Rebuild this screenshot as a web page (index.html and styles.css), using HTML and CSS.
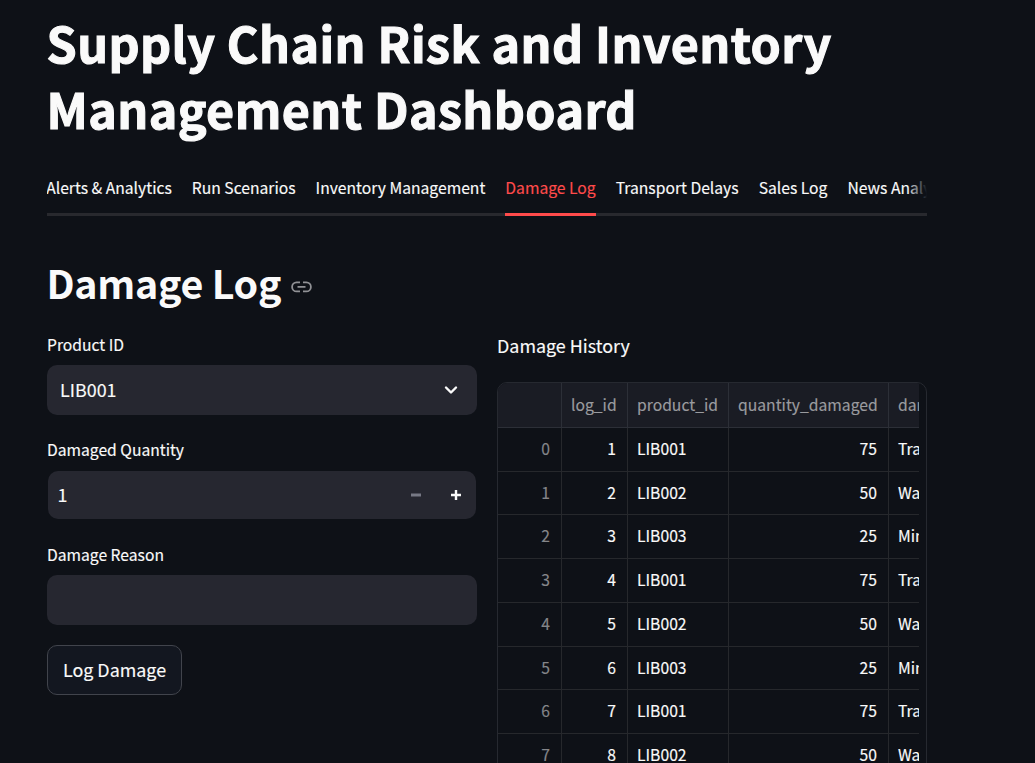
FILE: index.html
```html
<!DOCTYPE html>
<html lang="en">
<head>
<meta charset="utf-8">
<title>Supply Chain Risk and Inventory Management Dashboard</title>
<link rel="stylesheet" href="styles.css">
</head>
<body>
<main class="page">
  <h1 class="title">Supply Chain Risk and Inventory<br>Management Dashboard</h1>
  <nav class="tabs">
    <a class="tab">Alerts &amp; Analytics</a>
    <a class="tab">Run Scenarios</a>
    <a class="tab">Inventory Management</a>
    <a class="tab active">Damage Log</a>
    <a class="tab">Transport Delays</a>
    <a class="tab">Sales Log</a>
    <a class="tab">News Analysis</a>
  </nav>
  <div class="heading">
    <h2 class="heading-text">Damage Log</h2>
    <svg class="link-icon" width="21" height="12" viewBox="0 0 21 12" fill="none" stroke="#909195" stroke-width="1.8"><path d="M9 1.4H5.6a4.5 4.5 0 0 0 0 9H9M12 1.4h3.4a4.5 4.5 0 0 1 0 9H12M6.5 5.9h8"/></svg>
  </div>
  <div class="columns">
    <form class="form">
      <label class="label">Product ID</label>
      <div class="field select"><span class="value">LIB001</span>
        <svg width="14" height="10" viewBox="0 0 14 10" fill="none" stroke="#fafafa" stroke-width="2.4" stroke-linecap="round" stroke-linejoin="round"><path d="M2 2.5l5 5 5-5"/></svg>
      </div>
      <label class="label">Damaged Quantity</label>
      <div class="field number"><span class="value">1</span>
        <svg class="steps" width="52" height="12" viewBox="0 0 52 12"><path fill="#777985" d="M1 4.5h10v3H1z"/><path fill="#fafafa" d="M41 4.8h3.8V1h2.4v3.8H51v2.4h-3.8V11h-2.4V7.2H41z"/></svg>
      </div>
      <label class="label">Damage Reason</label>
      <div class="field"></div>
      <button class="button" type="button">Log Damage</button>
    </form>
    <section class="history">
      <p class="history-title">Damage History</p>
      <div class="frame">
        <div class="grid">
          <div class="row head"><span></span><span>log_id</span><span>product_id</span><span>quantity_damaged</span><span>damage_reason</span></div>
          <div class="row"><span>0</span><span>1</span><span>LIB001</span><span>75</span><span>Transport</span></div>
          <div class="row"><span>1</span><span>2</span><span>LIB002</span><span>50</span><span>Warehouse</span></div>
          <div class="row"><span>2</span><span>3</span><span>LIB003</span><span>25</span><span>Minor</span></div>
          <div class="row"><span>3</span><span>4</span><span>LIB001</span><span>75</span><span>Transport</span></div>
          <div class="row"><span>4</span><span>5</span><span>LIB002</span><span>50</span><span>Warehouse</span></div>
          <div class="row"><span>5</span><span>6</span><span>LIB003</span><span>25</span><span>Minor</span></div>
          <div class="row"><span>6</span><span>7</span><span>LIB001</span><span>75</span><span>Transport</span></div>
          <div class="row"><span>7</span><span>8</span><span>LIB002</span><span>50</span><span>Warehouse</span></div>
        </div>
      </div>
    </section>
  </div>
</main>
</body>
</html>
```
FILE: styles.css
```css
* { box-sizing: border-box; }
body {
  margin: 0;
  background: #0e1117;
  color: #fafafa;
  font-family: "Noto Sans CJK SC", "Noto Sans", sans-serif;
  font-size: 17.9px;
  -webkit-text-stroke: 0.15px;
}
.page { width: 880px; height: 763px; margin-left: 47px; padding-top: 9px; overflow: hidden; }
.title {
  margin: 0 0 0 -0.5px;
  font-size: 48.4px;
  line-height: 66px;
  font-weight: 700;
  letter-spacing: 0.43px;
  white-space: nowrap;
  -webkit-text-stroke: 1.1px;
}
.tabs {
  display: flex;
  gap: 20px;
  position: relative;
  height: 50px;
  margin-top: 25px;
  box-shadow: inset 0 -3px #28292e;
  overflow: hidden;
  white-space: nowrap;
  font-size: 15.68px;
  line-height: 44px;
}
.tabs::after {
  content: "";
  position: absolute;
  right: 0;
  top: 0;
  width: 20px;
  height: 47px;
  background: linear-gradient(to right, transparent, #0e1117);
}
.tab { flex: none; height: 50px; }
.tab:first-child { margin-left: -0.8px; }
.tab.active { color: #ff4b4b; border-bottom: 3px solid #ff4b4b; }
.heading { display: flex; align-items: center; gap: 9.5px; height: 54px; margin-top: 40px; }
.heading-text {
  margin: 0 0 0 -0.5px;
  padding-bottom: 3px;
  font-size: 39.4px;
  line-height: 53px;
  font-weight: 600;
  letter-spacing: -0.3px;
  white-space: nowrap;
  -webkit-text-stroke: 0;
}
.link-icon { margin-top: 8px; }
.columns { display: grid; grid-template-columns: 430px 430px; gap: 20px; margin-top: 20px; }
.form { display: flex; flex-direction: column; align-items: flex-start; }
.label { height: 35px; line-height: 30px; font-size: 15.65px; }
.field {
  display: flex;
  align-items: center;
  justify-content: space-between;
  width: 430px;
  height: 50px;
  margin-bottom: 20px;
  padding: 0 19px 0 13px;
  border-radius: 10px;
  background: #262730;
}
.value { padding-bottom: 2px; }
.number { width: 428px; height: 48px; margin: 1px 1px 21px; padding: 0 14px 0 9.5px; }
.button {
  width: 135px;
  height: 50px;
  padding: 0 0 2px;
  border: 1px solid #41444c;
  border-radius: 10px;
  background: #131720;
  color: #fafafa;
  font: inherit;
}
.history-title { margin: 0; height: 52px; line-height: 30px; }
.frame {
  height: 500px;
  border: 1px solid #262930;
  border-radius: 10px;
  padding-right: 7px;
  overflow: hidden;
}
.grid { overflow: hidden; font-size: 15.7px; }
.row { display: grid; grid-template-columns: 64px 66px 101px 160px 160px; height: 43.74px; line-height: 42px; }
.row span {
  padding: 0 9px;
  border-right: 1px solid #26282c;
  border-bottom: 1px solid #26282c;
  white-space: nowrap;
}
.row span:nth-child(1), .row span:nth-child(2), .row span:nth-child(4) { text-align: right; padding-right: 11px; }
.row span:first-child { color: #85868a; }
.row.head { height: 45px; background: #1a1c24; color: #9a9b9f; line-height: 44px; }
.row.head span { border-color: #2c2f37; }
```
